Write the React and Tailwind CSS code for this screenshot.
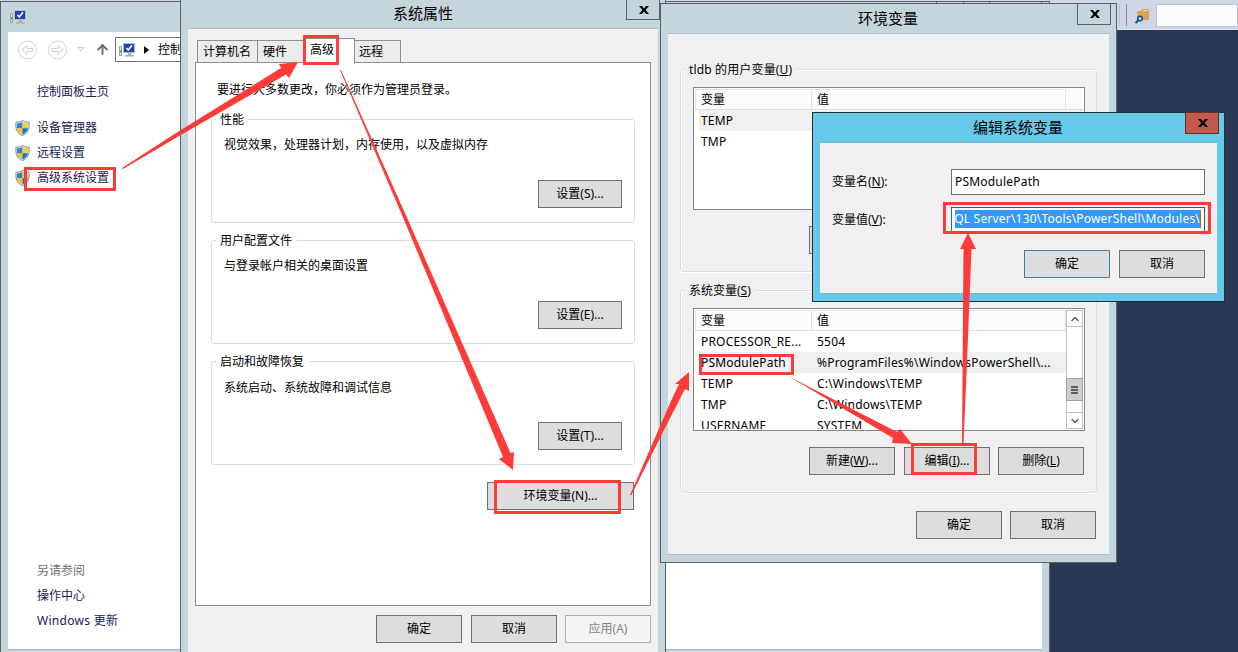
import clsx from 'clsx';
import { ChevronUp, ChevronDown, ArrowUp } from 'lucide-react';

const userVars = [{ name: 'TEMP' }, { name: 'TMP' }];

const systemVars = [
  { name: 'PROCESSOR_RE...', value: '5504' },
  { name: 'PSModulePath', value: '%ProgramFiles%\\WindowsPowerShell\\...' },
  { name: 'TEMP', value: 'C:\\Windows\\TEMP' },
  { name: 'TMP', value: 'C:\\Windows\\TEMP' },
  { name: 'USERNAME', value: 'SYSTEM' },
];

function Button({ children, className }) {
  return (
    <button
      type="button"
      className={clsx('h-7 shrink-0 border text-center leading-[26px]', className || 'w-[86px] border-[#707070] bg-[#dddddd]')}
    >
      {children}
    </button>
  );
}

function CloseGlyph() {
  return (
    <svg width="10" height="8" viewBox="0 0 10 8" className="ml-px block">
      <path d="M0 0h3l2 2.4L7 0h3L6.6 4 10 8H7L5 5.6 3 8H0l3.4-4z" fill="#000" />
    </svg>
  );
}

function Shield() {
  return (
    <svg width="15" height="16" viewBox="0 0 15 16" className="-mt-px shrink-0">
      <path d="M7.5.4C5.6 1.7 3.600 2.200 1 2.200.2 8.500 1.800 13.400 7.500 15.600 13.200 13.400 14.800 8.500 14 2.200 11.400 2.200 9.400 1.700 7.500.4z" fill="#dfe5e8" stroke="#77838a" strokeWidth=".9" />
      <path d="M7.500 2v6.200H2C1.700 6.500 1.800 5 2 3.500 4.200 3.400 6 2.900 7.500 2z" fill="#2f84cf" />
      <path d="M7.500 2v6.200H13c.3-1.700.2-3.200 0-4.700-2.200-.1-4-.6-5.500-1.500z" fill="#f7cf3c" />
      <path d="M7.500 8.200v6.200C4.500 13 2.700 11.200 2 8.200z" fill="#f3c12c" />
      <path d="M7.500 8.200v6.200c3-1.400 4.800-3.200 5.500-6.200z" fill="#1f6fc0" />
    </svg>
  );
}

function ComputerIcon() {
  return (
    <svg width="16" height="14" viewBox="0 0 16 14" className="shrink-0">
      <path d="M.5 3.500h2v9h-2z" fill="#e4e6e3" stroke="#9ba19c" />
      <path d="M1 7h1.500v2.500H1z" fill="#58b038" />
      <rect x="4.500" y=".5" width="11" height="9" fill="#1d3fc4" stroke="#b9bdb4" />
      <path d="M7.500 5l1.800 2L13 2.300" fill="none" stroke="#fff" strokeWidth="1.700" />
      <path d="M9 10h3v2H9zM6 12h9v1.500H6z" fill="#a9afa9" />
    </svg>
  );
}

function Group({ title, className, children }) {
  return (
    <div className={clsx('flex flex-col rounded-[3px] border border-[#d5dfe5]', className)}>
      <span className="-mt-[9px] ml-1 h-[18px] self-start bg-inherit px-1 leading-[18px] whitespace-nowrap">{title}</span>
      {children}
    </div>
  );
}

function VariableList({ rows, selected, scroll, className }) {
  return (
    <div className={clsx('flex h-[123px] w-[392px] shrink-0 border border-[#828790] bg-white p-px', className)}>
      <div className="flex min-w-0 flex-1 flex-col overflow-hidden">
        <div className="flex h-[21px] shrink-0 border-b border-[#dfdfdf] bg-[#fcfcfc] leading-[20px]">
          <span className="w-[117px] border-t border-r border-l border-[#e3e3e3] pl-[5px]">变量</span>
          <span className="w-[254px] border-t border-r border-[#e3e3e3] pl-[5px]">值</span>
        </div>
        {rows.map((row) => (
          <div
            key={row.name}
            className={clsx('ml-1 flex h-[21px] shrink-0 leading-[22px] tracking-[0.2px] whitespace-nowrap', row.name === selected && 'bg-[#f0f0f0]')}
          >
            <span className="w-[118px] pl-[2px]">{row.name}</span>
            <span>{row.value}</span>
          </div>
        ))}
      </div>
      {scroll && (
        <div className="flex w-[17px] shrink-0 flex-col border-x border-[#c0c0c0] bg-white text-[#606060]">
          <div className="flex h-[17px] items-center justify-center border-y border-[#c0c0c0]">
            <ChevronUp size={12} strokeWidth={3} />
          </div>
          <div className="flex-1" />
          <div className="-mx-px flex h-[23px] flex-col items-center justify-center gap-px border border-[#a0a0a0] bg-[#cdcdcd]">
            <div className="h-[2px] w-[7px] bg-[#606060]" />
            <div className="h-[2px] w-[7px] bg-[#606060]" />
            <div className="h-[2px] w-[7px] bg-[#606060]" />
          </div>
          <div className="h-[11px]" />
          <div className="flex h-[17px] items-center justify-center border-y border-[#c0c0c0]">
            <ChevronDown size={12} strokeWidth={3} />
          </div>
        </div>
      )}
    </div>
  );
}

function Toolbar() {
  return (
    <div className="flex h-[30px] items-start border-b border-[#dfe4f0] bg-[#cfd6e5] pt-1 pl-[1119px]">
      <div className="h-[22px] w-px bg-[#b8c2d8]" />
      <div className="ml-[6px] h-[22px] w-px bg-[#8591ad]" />
      <svg width="15" height="15" viewBox="0 0 15 15" className="mt-[5px] ml-2">
        <path d="M2 2h4l1-2h7v11H2z" fill="#d8a55b" />
        <path d="M8 1.500h5" stroke="#f1dcb5" />
        <circle cx="5" cy="9.500" r="2.300" fill="#cfd6e5" stroke="#0d4f8b" strokeWidth="1.500" />
        <path d="M3.400 11.200L.6 14" stroke="#0d4f8b" strokeWidth="2" />
      </svg>
      <div className="ml-[6px] h-[23px] flex-1 border border-[#b8c2d8] bg-[#fcfcfc]" />
    </div>
  );
}

function ControlPanelWindow() {
  return (
    <div className="absolute top-px left-0 flex h-[656px] w-[1050px] flex-col border border-[#59616a] bg-[#c4d6dc] px-[7px] pb-[7px]">
      <div className="flex h-[30px] shrink-0 items-start justify-between">
        <div className="pt-2 pl-[2px]"><ComputerIcon /></div>
        <div className="flex h-[2px] w-[106px] border-b border-[#59616a]">
          <div className="w-7 border-x border-[#59616a]" />
          <div className="w-[26px] border-r border-[#59616a]" />
          <div className="flex-1 border-r border-[#59616a]" />
        </div>
      </div>
      <div className="flex h-[618px] shrink-0 flex-col border-b border-[#aab8be] bg-white">
        <div className="flex items-center pt-[5px] pl-[10px]">
          <svg width="50" height="20" viewBox="0 0 50 20" fill="none" stroke="#d2d2d2">
            <circle cx="9.500" cy="10" r="9" />
            <circle cx="39.500" cy="10" r="9" />
            <path d="M4 10l5-4.500v3h6v3H9v3zM45 10l-5-4.500v3h-6v3h6v3z" />
          </svg>
          <svg width="7" height="5" viewBox="0 0 7 5" className="ml-[9px]"><path d="M.5.500h6l-3 3.500z" fill="#fff" stroke="#ccc" /></svg>
          <ArrowUp size={15} strokeWidth={3.200} className="ml-[11px] text-[#6d6d6d]" />
          <div className="ml-[5px] flex h-[25px] w-[300px] items-center border border-[#707070] pl-[3px] whitespace-nowrap">
            <ComputerIcon />
            <svg width="5" height="8" viewBox="0 0 5 8" className="ml-[9px]"><path d="M0 0l5 4-5 4z" /></svg>
            <span className="ml-[9px]">控制面板</span>
          </div>
        </div>
        <nav className="flex flex-col pl-[29px] leading-[18px] text-[#151c55]">
          <span className="mt-[21px]">控制面板主页</span>
          {['设备管理器', '远程设置', '高级系统设置'].map((label, i) => (
            <div key={label} className={clsx('-ml-[22px] flex h-[18px] items-center gap-[7px]', i === 0 ? 'mt-[18px]' : 'mt-[7px]')}>
              <Shield />
              <span>{label}</span>
            </div>
          ))}
        </nav>
        <div className="mt-auto flex flex-col gap-[7px] pb-[19px] pl-[29px] leading-[18px] text-[#151c55]">
          <span className="text-[#707070]">另请参阅</span>
          <span>操作中心</span>
          <span className="tracking-[0.3px]">Windows 更新</span>
        </div>
      </div>
    </div>
  );
}

const propertyGroups = [
  { title: '性能', text: '视觉效果，处理器计划，内存使用，以及虚拟内存', key: 'S' },
  { title: '用户配置文件', text: '与登录帐户相关的桌面设置', key: 'E' },
  { title: '启动和故障恢复', text: '系统启动、系统故障和调试信息', key: 'T' },
];

function SystemPropertiesWindow() {
  return (
    <div className="absolute isolate -top-2 left-[180px] flex h-[680px] w-[486px] flex-col border border-[#59616a] bg-[#c4d6dc] px-[7px] pb-[7px]">
      <div className="flex h-[35px] shrink-0 items-start">
        <div className="flex-1 pt-[10px] pl-8 text-center text-[15px] leading-5">系统属性</div>
        <div className="-mr-[2px] flex h-[27px] w-[34px] items-center justify-center border border-[#59616a] pt-[6px]"><CloseGlyph /></div>
      </div>
      <div className="flex flex-1 flex-col border-t border-[#aebbc2] bg-[#f0f0f0] px-[7px]">
        <div className="relative z-10 -mb-px flex h-[34px] items-end pl-[2px] leading-[22px]">
          <div className="h-[23px] w-[61px] border border-[#8c8f99] bg-[#ebebeb] pl-[5px]">计算机名</div>
          <div className="-ml-px h-[23px] w-[47px] border border-r-0 border-[#8c8f99] bg-[#ebebeb] pl-[5px]">硬件</div>
          <div className="-mb-px h-[26px] w-[51px] border border-b-0 border-[#8c8f99] bg-white pl-[5px]">高级</div>
          <div className="h-[23px] w-[46px] border border-l-0 border-[#8c8f99] bg-[#ebebeb] pl-[4px]">远程</div>
        </div>
        <div className="flex h-[544px] w-[456px] shrink-0 flex-col border border-[#8c8f99] bg-white px-[15px]">
          <p className="mt-[18px] pl-[6px] leading-[18px]">要进行大多数更改，你必须作为管理员登录。</p>
          {propertyGroups.map((g, i) => (
            <Group
              key={g.key}
              title={g.title}
              className={clsx('h-[104px] w-[424px] shrink-0 bg-white', i === 0 ? 'mt-[20px]' : 'mt-[17px]')}
            >
              <p className={clsx('pl-3 leading-[18px]', i === 2 ? 'mt-2' : 'mt-[7px]')}>{g.text}</p>
              <div className="mt-auto mr-3 mb-[14px] flex justify-end">
                <Button className="w-[84px] border-[#707070] bg-[#dddddd]">设置({g.key})...</Button>
              </div>
            </Group>
          ))}
          <div className="mt-[17px] flex justify-end pr-px">
            <Button className="w-[147px] border-[#707070] bg-[#dddddd]">环境变量(N)...</Button>
          </div>
        </div>
        <div className="mt-[9px] flex justify-end">
          <Button>确定</Button>
          <span className="w-[9px]" />
          <Button>取消</Button>
          <span className="w-2" />
          <Button className="w-[86px] border-[#adb2b5] bg-[#f4f4f4] text-[#838383]">应用(A)</Button>
        </div>
      </div>
    </div>
  );
}

function VariableButtons() {
  return (
    <div className="ml-[128px] flex">
      <Button>新建(<u>W</u>)...</Button>
      <span className="w-[9px]" />
      <Button>编辑(<u>I</u>)...</Button>
      <span className="w-2" />
      <Button>删除(<u>L</u>)</Button>
    </div>
  );
}

function EnvironmentWindow() {
  return (
    <div className="absolute top-[3px] left-[660px] flex h-[560px] w-[457px] flex-col border border-[#59616a] bg-[#c4d6dc] px-[7px] pb-[7px]">
      <div className="flex h-[29px] shrink-0 items-start">
        <div className="flex-1 pt-[4px] pl-[31px] text-center text-[15px] leading-5">环境变量</div>
        <div className="-mt-px -mr-[2px] flex h-[22px] w-[34px] items-center justify-center border border-[#59616a]"><CloseGlyph /></div>
      </div>
      <div className="flex flex-1 flex-col border-y border-[#aebbc2] bg-[#f0f0f0] px-3">
        <Group title={<span className="tracking-[0.15px]">tldb 的用户变量(<u>U</u>)</span>} className="mt-[35px] h-[203px] w-[417px] shrink-0 bg-[#f0f0f0] shadow-[inset_1px_1px_#fff,0_1px_#fff]">
          <VariableList rows={userVars} selected="TEMP" className="mt-[8px] ml-3" />
          <div className="mt-4"><VariableButtons /></div>
        </Group>
        <Group title={<>系统变量(<u>S</u>)</>} className="mt-[18px] h-[203px] w-[417px] shrink-0 bg-[#f0f0f0] shadow-[inset_1px_1px_#fff,0_1px_#fff]">
          <VariableList rows={systemVars} selected="PSModulePath" scroll className="mt-[8px] ml-3" />
          <div className="mt-4"><VariableButtons /></div>
        </Group>
        <div className="mt-[18px] flex justify-end gap-2 pr-px">
          <Button>确定</Button>
          <Button>取消</Button>
        </div>
      </div>
    </div>
  );
}

function EditVariableWindow() {
  return (
    <div className="absolute top-[112px] left-[812px] flex h-[190px] w-[413px] flex-col border border-[#252d33] bg-[#66c9ea] px-[7px] pb-[7px]">
      <div className="flex h-[29px] shrink-0 items-start">
        <div className="flex-1 pt-[4px] pl-[31px] text-center text-[15px] leading-5">编辑系统变量</div>
        <div className="-mt-px -mr-[2px] flex h-[22px] w-[34px] items-center justify-center border border-[#6b2f2a] bg-[#c4594e]"><CloseGlyph /></div>
      </div>
      <div className="flex flex-1 flex-col border-y border-[#80b2c6] bg-[#f0f0f0] px-3">
        <label className="mt-[26px] flex h-[26px] items-center">
          <span className="w-[119px]">变量名(<u>N</u>):</span>
          <span className="h-[26px] w-[254px] border border-[#707070] bg-white pl-[3px] leading-[23px] tracking-[0.2px]">PSModulePath</span>
        </label>
        <label className="mt-3 flex h-[26px] items-center">
          <span className="w-[119px]">变量值(<u>V</u>):</span>
          <span className="flex h-[26px] w-[254px] border border-[#2c628b] bg-white py-[2px] pr-[3px] pl-[3px]">
            <span className="flex h-[18px] w-[246px] justify-end overflow-hidden bg-[#3399ff] leading-[18px] tracking-[0.2px] whitespace-nowrap text-white">
              QL Server\130\Tools\PowerShell\Modules\
              <span className="w-px shrink-0 bg-[#cc6600]" />
            </span>
          </span>
        </label>
        <div className="mt-[17px] flex justify-end gap-[9px]">
          <Button className="w-[86px] border-[#3c7fb1] bg-[#dddddd]">确定</Button>
          <Button>取消</Button>
        </div>
      </div>
    </div>
  );
}

// red boxes and tapered arrows that mark the order of the steps
function Annotations() {
  return (
    <svg width="1238" height="652" viewBox="0 0 1238 652" className="pointer-events-none absolute inset-0">
      <g fill="none" stroke="#fd3b38" strokeWidth="3">
        <rect x="25.500" y="168.500" width="89" height="21" />
        <rect x="304.500" y="36.500" width="33" height="27" />
        <rect x="495.500" y="481.500" width="124" height="31" />
        <rect x="700.500" y="355.500" width="92" height="18" />
        <rect x="912.500" y="444.500" width="63" height="29" />
        <rect x="944.500" y="203.500" width="265" height="29" />
      </g>
      <g fill="#fd3b38">
        <path d="M122 168L180 130.500 281 68 279 64 298 62 289 78 286 74.500 180 135.500 123 169z" />
        <path d="M340 70h1L408.500 221 510.500 453 514 452 513 470 499 459 503 457 404.500 221z" />
        <path d="M630 495L671 401 679 384 675 384 689 372 689 391 685 389 664 430 631.500 495z" />
        <path d="M788 376L897 432 900 429 912 444 892 443 893 438z" />
        <path d="M962 444L963.500 249 960 249 968 233 976 249 971.500 249 967.500 350 963.500 444z" />
      </g>
    </svg>
  );
}

export default function App() {
  return (
    <div className="relative h-[652px] w-[1238px] overflow-hidden bg-[#293955] font-['Noto_Sans','Noto_Sans_CJK_SC',sans-serif] text-[12px] text-black">
      <Toolbar />
      <ControlPanelWindow />
      <SystemPropertiesWindow />
      <EnvironmentWindow />
      <EditVariableWindow />
      <Annotations />
    </div>
  );
}
